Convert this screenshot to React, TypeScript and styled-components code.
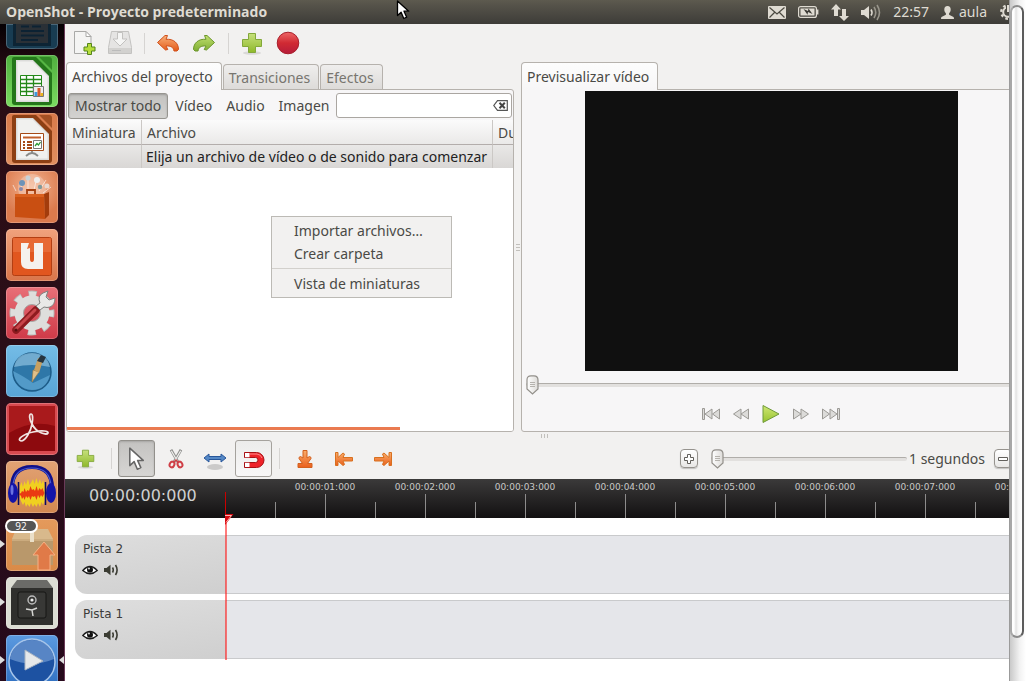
import React from 'react';
import styled, { createGlobalStyle, css } from 'styled-components';

const GlobalStyle = createGlobalStyle`
  *, *::before, *::after { box-sizing: border-box; }
  html, body { margin: 0; height: 100%; }
  body {
    background: #fff;
    color: #4a4a46;
    font: 14px/20px 'Noto Sans', 'Open Sans', sans-serif;
    overflow: hidden;
  }
  button, input { font: inherit; color: inherit; margin: 0; }
  button { border: 0; background: none; padding: 0; cursor: pointer; }
  svg { display: block; flex: none; }
`;

const Page = styled.div`
  display: flex;
  height: 100vh;
`;

const Screen = styled.div`
  flex: 1;
  min-width: 0;
  display: flex;
  flex-direction: column;
  overflow: hidden;
`;

/* ---------- top panel ---------- */

const TopBar = styled.header`
  flex: none;
  height: 24px;
  display: flex;
  align-items: center;
  padding-left: 6px;
  background: linear-gradient(#5d5a4f, #56534a 20%, #3d3c38);
  color: #dfdbd2;
`;

const WindowTitle = styled.h1`
  margin: 0 auto 0 0;
  font: 700 14px/20px 'Open Sans', 'Noto Sans', sans-serif;
`;

const Indicators = styled.div`
  display: flex;
  align-items: center;
  margin-right: -7px;
  gap: 12px;
`;

const Indicator = styled.button`
  display: flex;
  align-items: center;
  gap: 5px;
  height: 24px;

  &:last-child { margin-left: 1px; }
`;

const Pointer = styled.div`
  position: absolute;
  left: 396px;
  top: 0;
  z-index: 10;
  pointer-events: none;
`;

/* ---------- launcher ---------- */

const Desktop = styled.div`
  flex: 1;
  min-height: 0;
  display: flex;
`;

const Launcher = styled.nav`
  flex: none;
  width: 65px;
  display: flex;
  flex-direction: column;
  align-items: center;
  gap: 6px;
  padding-right: 1px;
  overflow: hidden;
  background: linear-gradient(#050003, #2a0d15 50px, #2b0e18 50%, #260a1c);
  border-right: 1px solid #6a3a58;
`;

const Tile = styled.button<{ $bg: string; $folded?: boolean }>`
  position: relative;
  flex: none;
  width: 52px;
  height: ${(p) => (p.$folded ? 25 : 52)}px;
  border-radius: ${(p) => (p.$folded ? '0 0 5px 5px' : '5px')};
  background: ${(p) => p.$bg};
  box-shadow: inset 0 0 0 1px rgba(255, 255, 255, 0.22);
`;

const Arrow = styled.span<{ $right?: boolean }>`
  position: absolute;
  top: 21px;
  ${(p) => (p.$right ? 'right: -6px;' : 'left: -6px;')}
  border: 4px solid transparent;
  ${(p) =>
    p.$right
      ? 'border-left-width: 0; border-right: 5px solid #ddd;'
      : 'border-right-width: 0; border-left: 5px solid #ddd;'}
`;

const Count = styled.span`
  position: absolute;
  left: -1px;
  top: 0;
  width: 33px;
  height: 14px;
  border: 2px solid #fff;
  border-radius: 7px;
  background: #555;
  color: #fff;
  font: 10px/10px 'Open Sans', sans-serif;
  text-align: center;
`;

/* ---------- application window ---------- */

const AppWindow = styled.main`
  flex: 1;
  min-width: 0;
  display: flex;
  flex-direction: column;
  overflow: hidden;
  background: #f2f1f0;
`;

const Toolbar = styled.div`
  flex: none;
  display: flex;
  align-items: center;
  height: 38px;
  padding-left: 1px;
`;

const ToolButton = styled.button`
  width: 36px;
  height: 36px;
  display: flex;
  align-items: center;
  justify-content: center;
`;

const Divider = styled.span<{ $w?: number }>`
  flex: none;
  width: ${(p) => p.$w ?? 12}px;
  height: 21px;
  background: linear-gradient(#d6d4d2, #d6d4d2) center / 1px 100% no-repeat;
`;

const Split = styled.div`
  flex: none;
  display: flex;
  padding-left: 1px;
`;

const Pane = styled.section<{ $w?: number }>`
  position: relative;
  display: flex;
  flex-direction: column;
  min-width: 0;
  ${(p) =>
    p.$w
      ? css`flex: 0 0 ${p.$w}px;`
      : css`flex: 1; margin-right: -12px;`}
`;

const TabRow = styled.div`
  display: flex;
  align-items: flex-end;
  gap: 1px;
  height: 28px;
  position: relative;
  z-index: 1;
  margin-bottom: -1px;
`;

const Tab = styled.button<{ $on?: boolean }>`
  height: ${(p) => (p.$on ? 28 : 25)}px;
  margin-bottom: ${(p) => (p.$on ? 0 : 1)}px;
  padding: ${(p) => (p.$on ? 0 : 1)}px 8px 0 5px;
  border: 1px solid #b6b2ad;
  border-bottom: 0;
  border-radius: 4px 4px 0 0;
  white-space: nowrap;
  background: ${(p) => (p.$on ? 'linear-gradient(#fdfdfd, #f7f6f7)' : 'linear-gradient(#efeeed, #dddbd9)')};
  color: ${(p) => (p.$on ? '#4a4a46' : '#77756f')};
`;

const Panel = styled.div`
  flex: 1;
  display: flex;
  flex-direction: column;
  border: 1px solid #b6b2ad;
  border-radius: 0 3px 3px 3px;
  background: #f7f6f7;
  overflow: hidden;
`;

const FilterRow = styled.div`
  display: flex;
  align-items: center;
  height: 30px;
  padding: 1px 1px 0;
`;

const Filter = styled.button<{ $on?: boolean }>`
  height: 26px;
  padding: 1px 6px 0;
  border: 1px solid transparent;
  border-radius: 3px;
  white-space: nowrap;
  ${(p) =>
    p.$on &&
    css`
      border-color: #979590;
      background: linear-gradient(#c3c2c0, #d3d2d0);
      box-shadow: inset 0 1px 2px rgba(0, 0, 0, 0.2);
    `}
`;

const SearchBox = styled.div`
  flex: 1;
  min-width: 0;
  height: 25px;
  display: flex;
  align-items: center;
  padding: 0 3px;
  border: 1px solid #aaa6a1;
  border-radius: 3px;
  background: #fff;
`;

const SearchInput = styled.input`
  flex: 1;
  min-width: 0;
  border: 0;
  outline: 0;
  padding: 0 4px;
  background: none;
`;

const FileArea = styled.div`
  flex: 1;
  display: flex;
  flex-direction: column;
  justify-content: space-between;
  background: #fff;
`;

const FileTable = styled.table`
  width: 100%;
  table-layout: fixed;
  border-collapse: separate;
  border-spacing: 0;

  th, td {
    height: 23px;
    padding: 0 0 0 5px;
    border-right: 1px solid #cbc8c5;
    font-weight: 400;
    text-align: left;
    white-space: nowrap;
    overflow: hidden;
  }
  th {
    height: 25px;
    padding-top: 2px;
    border-bottom: 1px solid #b3adab;
    background: linear-gradient(#fbfbfb, #eae9e8);
  }
  td {
    padding-left: 4px;
    background: linear-gradient(#e9e8e7, #d9d7d5);
    color: #222;
  }
  th:last-child, td:last-child { border-right: 0; }
`;

const Col = styled.col<{ $w?: number }>`
  width: ${(p) => (p.$w ? `${p.$w}px` : 'auto')};
`;

const ScrollMark = styled.div`
  width: 333px;
  height: 3px;
  margin-bottom: 1px;
  background: #ea7a50;
`;

const ContextMenu = styled.div`
  position: absolute;
  left: 205px;
  top: 154px;
  width: 181px;
  padding: 2px 0;
  border: 1px solid #bcbab5;
  background: #f2f1f0;
  z-index: 2;
`;

const MenuItem = styled.button`
  display: block;
  width: 100%;
  height: 23px;
  padding: 0 22px;
  text-align: left;
`;

const MenuLine = styled.hr`
  margin: 3px 0;
  border: 0;
  height: 1px;
  background: #d2d0cc;
`;

const SplitHandle = styled.div<{ $across?: boolean }>`
  flex: none;
  display: flex;
  align-items: center;
  justify-content: center;
  gap: 2px;
  ${(p) => (p.$across ? 'height: 7px; padding-left: 14px;' : 'width: 7px; flex-direction: column;')}

  i {
    background: #c2c0bc;
    ${(p) => (p.$across ? 'width: 1px; height: 4px;' : 'width: 4px; height: 1px;')}
  }
`;

/* ---------- preview ---------- */

const PreviewBody = styled.div`
  flex: 1;
  display: flex;
  flex-direction: column;
  align-items: center;
  padding: 1px 0 2px;
`;

const VideoCanvas = styled.div`
  width: 373px;
  height: 280px;
  background: #101010;
`;

const thumb = encodeURIComponent(
  "<svg xmlns='http://www.w3.org/2000/svg' width='13' height='20'><defs><linearGradient id='g'><stop stop-color='#fff'/><stop offset='1' stop-color='#dddbd8'/></linearGradient></defs><path d='M1 5Q1 .8 5 .8h3q4 0 4 4.200v9L6.500 19 1 14z' fill='url(#g)' stroke='#93908b' stroke-width='1.200'/><path d='M4 7.500h5M4 9.500h5M4 11.500h5' stroke='#b5b2ad'/></svg>"
);

const Slider = styled.input`
  appearance: none;
  display: block;
  height: 20px;
  background: none;

  &::-webkit-slider-runnable-track {
    height: 4px;
    border-top: 1px solid #b0ada9;
    border-radius: 2px;
    background: #e2e0de;
  }
  &::-webkit-slider-thumb {
    appearance: none;
    width: 13px;
    height: 20px;
    margin-top: -9px;
    background: url("data:image/svg+xml,${thumb}") no-repeat;
  }
`;

const SeekSlider = styled(Slider)`
  align-self: stretch;
  margin: 4px 4px 0;
`;

const ZoomSlider = styled(Slider)`
  width: 196px;
  margin: 0 2px 0 13px;
`;

const Transport = styled.div`
  display: flex;
  margin-top: 4px;
`;

const TransportButton = styled.button`
  width: 30px;
  height: 30px;
  display: flex;
  align-items: center;
  justify-content: center;
`;

/* ---------- timeline ---------- */

const TimelineToolbar = styled(Toolbar)`
  height: 40px;
  gap: 2px;
  padding: 0 0 1px 2px;
`;

const EditButton = styled.button<{ $look?: 'pressed' | 'raised' }>`
  flex: none;
  width: 37px;
  height: 37px;
  display: flex;
  align-items: center;
  justify-content: center;
  border: 1px solid transparent;
  border-radius: 3px;
  ${(p) =>
    p.$look === 'pressed' &&
    css`
      border-color: #92908b;
      background: linear-gradient(#c4c3c1, #d6d5d3);
      box-shadow: inset 0 1px 2px rgba(0, 0, 0, 0.15);
    `}
  ${(p) =>
    p.$look === 'raised' &&
    css`
      border-color: #a5a29d;
      background: linear-gradient(#ececeb, #f8f7f7);
    `}
`;

const ZoomGroup = styled.div`
  display: flex;
  align-items: center;
  margin: 0 -3px 0 auto;
`;

const ZoomLabel = styled.label`
  width: 85px;
  white-space: nowrap;
`;

const ZoomButton = styled.button`
  width: 18px;
  height: 19px;
  display: flex;
  align-items: center;
  justify-content: center;
  border: 1px solid #96938e;
  border-radius: 4px;
  background: linear-gradient(#fff, #e8e7e6);
  box-shadow: 0 1px 1px rgba(0, 0, 0, 0.2);
`;

const Timeline = styled.div`
  position: relative;
  flex: 1;
  background: #fff;
`;

const Ruler = styled.div`
  display: flex;
  height: 39px;
  overflow: hidden;
  background: linear-gradient(#3b3a3a, #121011);
  color: #c8c8c6;
  font-family: 'DejaVu Sans', sans-serif;
`;

const Clock = styled.div`
  flex: none;
  width: 210px;
  padding: 7px 0 0 24px;
  font-size: 16px;
  line-height: 20px;
  color: #cfd0d0;
`;

const Second = styled.div`
  flex: none;
  width: 100px;
  display: flex;
  flex-direction: column;
  justify-content: space-between;
  padding-top: 2px;
  font-size: 9px;
  line-height: 12px;
  text-align: center;
`;

const Ticks = styled.div`
  display: flex;
  align-items: flex-end;
  gap: 49px;

  i { width: 1px; height: 16px; background: #8d8c8c; }
  i + i { height: 24px; }
`;

const Playhead = styled.div`
  position: absolute;
  left: 160px;
  top: 13px;
  z-index: 1;
`;

const Tracks = styled.div`
  display: flex;
  flex-direction: column;
  gap: 6px;
  padding: 17px 0 0 10px;
`;

const Track = styled.section`
  display: flex;
  height: 59px;
`;

const TrackHead = styled.div`
  flex: none;
  width: 151px;
  padding: 4px 8px;
  border-radius: 12px 0 0 12px;
  background: linear-gradient(170deg, #dedede, #cfcfcf);
`;

const TrackName = styled.h2`
  margin: 0;
  font: 12px/20px 'DejaVu Sans', sans-serif;
  color: #3c3c3a;
`;

const TrackIcons = styled.div`
  display: flex;
  gap: 6px;
  margin-left: -1px;
  padding-top: 5px;
`;

const TrackLane = styled.div`
  flex: 1;
  border: 1px solid #c9cacc;
  border-width: 1px 0;
  background: #e5e6ea;
`;

/* ---------- page scrollbar ---------- */

const ScrollTrack = styled.div`
  flex: none;
  width: 17px;
  padding: 5px 2px 43px 0;
  border-left: 1px solid #9b9b9b;
  background: linear-gradient(90deg, #c9c9c9, #f2f2f2 60%, #fff);
`;

const ScrollThumb = styled.div`
  height: 100%;
  border: 2px solid #8c8c8c;
  border-right-color: #5c5c5c;
  border-left-color: #a8a8a8;
  border-radius: 7px;
  background: linear-gradient(90deg, #fff 20%, #e2e2e2 40%, #f6f6f6 60%, #fff);
`;

/* ---------- icons ---------- */

const MailIcon = () => (
  <svg width="18" height="13" viewBox="0 0 18 13">
    <rect width="18" height="13" rx="1" fill="#dfdbd2" />
    <path d="M1.500 1.500 9 8l7.500-6.500M1.500 11.500 6.500 6.500M16.500 11.500l-5-5" fill="none" stroke="#4b4941" strokeWidth="1.200" />
  </svg>
);

const BatteryIcon = () => (
  <svg width="21" height="12" viewBox="0 0 21 12">
    <rect x=".6" y=".6" width="17.800" height="10.800" rx="2" fill="none" stroke="#dfdbd2" strokeWidth="1.200" />
    <rect x="2.500" y="2.500" width="14" height="7" fill="#dfdbd2" />
    <path d="M19.500 3.500v5" stroke="#dfdbd2" strokeWidth="1.800" />
    <path d="m5.500 3 4.500 2 .5-2.500 4 5.500-4.500-2-.5 2.800z" fill="#3b3934" />
  </svg>
);

const NetworkIcon = () => (
  <svg width="18" height="17" viewBox="0 0 18 17">
    <path d="M5 0 10 5.500H7V12H3V5.500H0zM13 17l-5-5h3V5h4v7h3z" fill="#dfdbd2" />
  </svg>
);

const SoundIcon = () => (
  <svg width="20" height="17" viewBox="0 0 20 17">
    <path d="M0 6h3l5-4v13l-5-4H0z" fill="#dfdbd2" />
    <path d="M10 5.500q2 3 0 6" fill="none" stroke="#dfdbd2" strokeWidth="1.600" />
    <path d="M13 3q3.500 5.500 0 11M16 1q5 7.500 0 15" fill="none" stroke="#98958b" strokeWidth="1.600" />
  </svg>
);

const UserIcon = () => (
  <svg width="13" height="13" viewBox="0 0 13 13">
    <path d="M6.500 0c2.200 0 3.200 1.500 3.200 3.500 0 1.800-.7 2.900-1.600 3.700v1.500l4.400 2.300q.5.500.5 2H0q0-1.500.5-2l4.400-2.300V7.200C4 6.400 3.300 5.300 3.300 3.500 3.300 1.500 4.300 0 6.500 0z" fill="#dfdbd2" />
  </svg>
);

const GearIcon = () => (
  <svg width="16" height="16" viewBox="0 0 16 16">
    <circle cx="8" cy="8" r="4.800" fill="none" stroke="#dfdbd2" strokeWidth="2" />
    <circle cx="8" cy="8" r="6.700" fill="none" stroke="#dfdbd2" strokeWidth="2.400" strokeDasharray="2.600 2.660" />
    <path d="M8 0v9" stroke="#4b4941" strokeWidth="4" />
    <path d="M8 1v7" stroke="#dfdbd2" strokeWidth="2" />
  </svg>
);

const PointerIcon = ({ size = 20, edge = '#fff', fill = '#000' }: { size?: number; edge?: string; fill?: string }) => (
  <svg width={size * 0.75} height={size} viewBox="0 0 15 20">
    <path d="M1.500 1v14.500l3.600-3.300 2.700 6.300 2.900-1.300-2.700-6h4.700z" fill={fill} stroke={edge} strokeWidth="1.300" strokeLinejoin="round" />
  </svg>
);

const NewIcon = () => (
  <svg width="24" height="24" viewBox="0 0 24 24">
    <path d="M2.500.5h11.500l5 5v17h-16.500z" fill="#f4f4f3" stroke="#a9a9a7" />
    <path d="M14 .5v5h5z" fill="#fff" stroke="#a9a9a7" />
    <path d="M15.500 12.500h4v3.500h3.500v4h-3.500v3.500h-4v-3.500h-3.500v-4h3.500z" fill="#b6dc3c" stroke="#54851a" />
  </svg>
);

const SaveIcon = () => (
  <svg width="24" height="24" viewBox="0 0 24 24">
    <path d="M3.500.5h17l3 16v6H.5v-6z" fill="#e5e4e3" stroke="#c3c2c0" />
    <path d="M1 17h22v5H1z" fill="#d2d1cf" />
    <path d="M4 19.500h9" stroke="#bbb" />
    <path d="M9.500 1.500h5V8h4.500l-7 7-7-7h4.500z" fill="#f5f5f4" stroke="#c2c1bf" />
  </svg>
);

const ArrowBack = ({ forward }: { forward?: boolean }) => {
  const id = forward ? 'redo' : 'undo';
  return (
    <svg width="24" height="24" viewBox="0 0 24 24">
      <defs>
        <linearGradient id={id} x2="0" y2="1">
          <stop stopColor={forward ? '#c0df6e' : '#f9b07a'} />
          <stop offset="1" stopColor={forward ? '#7fae33' : '#e35a18'} />
        </linearGradient>
      </defs>
      <path
        transform={forward ? 'translate(24 0) scale(-1 1)' : undefined}
        d="M1.500 11.500 9 4.500h2.500L10 8.300c7.500-.6 12.500 3.700 12.500 10.200l-1.500 1.500h-3c-.6-4-3.500-5.300-8-5l1.800 3.500L9.500 19z"
        fill={`url(#${id})`}
        stroke={forward ? '#6c962c' : '#d0501c'}
        strokeLinejoin="round"
      />
    </svg>
  );
};

const PlusIcon = ({ size = 24 }: { size?: number }) => (
  <svg width={size} height={size} viewBox="0 0 24 24">
    <defs>
      <linearGradient id="plus" x2="0" y2="1">
        <stop stopColor="#c6e07c" />
        <stop offset="1" stopColor="#8fb92a" />
      </linearGradient>
    </defs>
    <ellipse cx="12" cy="22" rx="9" ry="1.800" fill="#000" opacity=".1" />
    <path d="M8.500 2.500h7v6h6v7h-6v6h-7v-6h-6v-7h6z" fill="url(#plus)" stroke="#83a83a" strokeLinejoin="round" />
  </svg>
);

const RecordIcon = () => (
  <svg width="24" height="24" viewBox="0 0 24 24">
    <defs>
      <linearGradient id="rec" x2="0" y2="1">
        <stop stopColor="#ee6767" />
        <stop offset=".5" stopColor="#d02a33" />
        <stop offset="1" stopColor="#b51c3a" />
      </linearGradient>
    </defs>
    <circle cx="12" cy="12" r="10.800" fill="url(#rec)" stroke="#a8202c" />
  </svg>
);

const ClearIcon = () => (
  <svg width="15" height="11" viewBox="0 0 15 11">
    <path d="M4.500.7h9.800v9.600H4.500L.8 5.500z" fill="#fff" stroke="#555" strokeWidth="1.200" />
    <path d="m6.500 2.800 5.300 5.400m0-5.400L6.500 8.200" stroke="#444" strokeWidth="2" />
  </svg>
);

const SkipIcon = ({ bar, flip }: { bar?: boolean; flip?: boolean }) => (
  <svg width="20" height="14" viewBox="0 0 20 14">
    <g transform={flip ? 'translate(20 0) scale(-1 1)' : undefined} fill="#dcdbd9" stroke="#9b9995">
      {bar && <path d="M1.500 1.500h2v11h-2z" />}
      <path d={bar ? 'M11 2v10L4 7zM18.500 2v10L11.500 7z' : 'M10 2v10L2.500 7zM17.500 2v10L10 7z'} strokeLinejoin="round" />
    </g>
  </svg>
);

const PlayIcon = () => (
  <svg width="20" height="20" viewBox="0 0 20 20">
    <defs>
      <linearGradient id="play" x2="0" y2="1">
        <stop stopColor="#cfe774" />
        <stop offset="1" stopColor="#97c32f" />
      </linearGradient>
    </defs>
    <path d="M2 1.500v17L18 10z" fill="url(#play)" stroke="#6f9a3a" strokeLinejoin="round" />
  </svg>
);

const ScissorsIcon = () => (
  <svg width="18" height="20" viewBox="0 0 18 20">
    <path d="M4 .8 11 13M14 .8 7 13" stroke="#8f8f8d" strokeWidth="2.800" />
    <path d="M4.300 1.800 10.300 12M13.700 1.800 7.700 12" stroke="#efefed" strokeWidth="1.200" />
    <ellipse cx="5" cy="15.500" rx="2.300" ry="2.900" transform="rotate(25 5 15.500)" fill="none" stroke="#cf4048" strokeWidth="2" />
    <ellipse cx="13" cy="15.500" rx="2.300" ry="2.900" transform="rotate(-25 13 15.500)" fill="none" stroke="#cf4048" strokeWidth="2" />
    <path d="m7 13 2-2 2 2" fill="none" stroke="#cf4048" strokeWidth="1.500" />
  </svg>
);

const ResizeIcon = () => (
  <svg width="24" height="24" viewBox="0 0 24 24">
    <ellipse cx="12" cy="20" rx="8" ry="3" fill="#000" opacity=".16" />
    <path d="M1 11l5-4v2.500h12V7l5 4-5 4v-2.500H6V15z" fill="#5588c5" stroke="#28579a" strokeLinejoin="round" />
  </svg>
);

const MagnetIcon = () => (
  <svg width="22" height="20" viewBox="0 0 22 20">
    <path d="M1.500 3.500h12a7 7 0 0 1 0 15h-12v-5h11a2.500 2.500 0 0 0 0-5h-11z" fill="#ee2229" stroke="#a81014" />
    <path d="M2 4h4.500v4.200H2zM2 13.800h4.500V18H2z" fill="#fff" />
    <path d="M7 5h7q4 .5 5 4" fill="none" stroke="#ff8a8a" />
  </svg>
);

const MarkIcon = ({ kind }: { kind: 'down' | 'left' | 'right' }) => (
  <svg width="20" height="20" viewBox="0 0 20 20">
    <defs>
      <linearGradient id={`mark-${kind}`} x2="0" y2="1">
        <stop stopColor="#f9ae6c" />
        <stop offset="1" stopColor="#ea5f1c" />
      </linearGradient>
    </defs>
    {kind === 'down' ? (
      <path
        d="M8 1.500h4v7.500l2.500-1.500q2 .5 1.500 2L12.500 14.500h4.500v4H3v-4h4.500L4 9.500q-.5-1.500 1.500-2L8 9z"
        fill="url(#mark-down)"
        stroke="#d2601e"
        strokeLinejoin="round"
      />
    ) : (
      <g transform={kind === 'right' ? 'translate(20 0) scale(-1 1)' : undefined}>
        <path
          d="M1.500 3.500h2.500v5L9 4l1.500 1-1.500 3.500h9.500v3.500H9l1.500 3.500L9 16.500 4 12v4.500H1.500z"
          fill={`url(#mark-${kind})`}
          stroke="#d8701f"
          strokeLinejoin="round"
        />
      </g>
    )}
  </svg>
);

const BoxSign = ({ plus }: { plus?: boolean }) => (
  <svg width="12" height="12" viewBox="0 0 12 12">
    <path
      d={plus ? 'M4.500 1.500h3v3h3v3h-3v3h-3v-3h-3v-3h3z' : 'M1.500 4.500h9v3h-9z'}
      fill="#fff"
      stroke="#62605c"
    />
  </svg>
);

const EyeIcon = () => (
  <svg width="16" height="12" viewBox="0 0 16 12">
    <path d="M.8 6.500Q8-1.500 15.200 6.500 8 13 .8 6.500z" fill="#fff" stroke="#1c1c1c" strokeWidth="1.300" />
    <circle cx="8" cy="5.800" r="3" fill="#111" />
    <circle cx="7" cy="4.600" r="1" fill="#ddd" />
  </svg>
);

const VolumeIcon = () => (
  <svg width="15" height="12" viewBox="0 0 15 12">
    <path d="M0 4h2.500L6.500.8v10.400L2.500 8H0z" fill="#3b3c33" />
    <path d="M8.500 3.500q1.500 2.500 0 5M11.500 1q3.200 5 0 10" fill="none" stroke="#3b3c33" strokeWidth="1.600" />
  </svg>
);

const PlayheadIcon = () => (
  <svg width="10" height="168" viewBox="0 0 10 168">
    <rect x="0" width="1" height="27" fill="#c00" />
    <rect x="0" y="27" width="2" height="141" fill="#ff1010" opacity=".55" />
    <path d="M0 22h8.500L0 33z" fill="#d80b12" />
    <path d="M0 23.500h6.500l-5.500 7" fill="none" stroke="#ffb3b0" />
  </svg>
);

/* ---------- launcher artwork ---------- */

const Art = ({ children, h = 52 }: { children: React.ReactNode; h?: number }) => (
  <svg width="52" height={h} viewBox={`0 ${52 - h} 52 ${h}`}>{children}</svg>
);

const Doc = ({ edge, children }: { edge: string; children: React.ReactNode }) => (
  <>
    <path d="M6 4q0-2 2-2h22l16 16v29q0 3-3 3H9q-3 0-3-3z" fill={edge} />
    <path d="M10 5h17l16 16v26H10z" fill="#dcdcda" />
    <path d="M11.500 6.500h15l15 15v24h-30z" fill="#f1f1ef" />
    <path d="M33 2h10q3 0 3 3v10z" fill={edge} opacity=".7" />
    {children}
  </>
);

const WriterArt = () => (
  <Art h={25}>
    <path d="M7 20h38v29H7z" fill="#0d2434" />
    <path d="M10 20h32v26H10z" fill="#2a3036" />
    <path d="M15 29.500h8M26 29.500h9M15 34h23M15 38.500h23M15 43h17" stroke="#0c2233" strokeWidth="1.800" />
  </Art>
);

const CalcArt = () => (
  <Art>
    <Doc edge="#24761a">
      <path d="M14.500 20.500h21v20h-21z" fill="#fff" stroke="#24891a" />
      <path d="M14 24.500h22M14 28.500h22M14 32.500h22M14 36.500h22M20.500 20v21M27.500 20v21" stroke="#24891a" strokeWidth="1.300" />
      <path d="M27.500 31.500h10v10h-10z" fill="#eee" stroke="#777" />
      <path d="M28.500 37h3v4h-3z" fill="#3e9bdc" />
      <path d="M31.500 33h3v8h-3z" fill="#d8592a" />
      <path d="M34.500 38h2.500v3h-2.500z" fill="#eab31c" />
    </Doc>
  </Art>
);

const ImpressArt = () => (
  <Art>
    <Doc edge="#8d3f14">
      <path d="M14.500 20.500h23v17h-23z" fill="#fff" stroke="#a54a17" />
      <path d="M17 24.500h18" stroke="#c2602c" strokeWidth="2" />
      <path d="M17 29h2M17 32h2M17 35h2M21 29h5M21 32h5M21 35h5" stroke="#a54a17" strokeWidth="1.800" />
      <path d="M27.500 27.500h8v8h-8z" fill="#fff" stroke="#777" />
      <path d="m29 33 2-2.500 1.500 1.500 2-3" fill="none" stroke="#2c9a36" strokeWidth="1.300" />
      <path d="M26 38v2m-6 3q6-6 12 0" fill="none" stroke="#8a8a88" strokeWidth="1.800" />
    </Doc>
  </Art>
);

const SoftwareArt = () => (
  <Art>
    <circle cx="26" cy="17" r="14" fill="#fff" opacity=".25" />
    <path d="m10 20-3-6m9 5-2-9m8 9V6m6 13 3-13m2 14 7-11m-3 13 8-6" stroke="#fff" opacity=".6" />
    <circle cx="16" cy="12" r="3" fill="#6d93b8" />
    <circle cx="22" cy="7" r="2.500" fill="#c9d3d8" />
    <circle cx="31" cy="9" r="3" fill="#eee" />
    <circle cx="34" cy="16" r="2.200" fill="#7f9a9b" />
    <circle cx="15" cy="18" r="2" fill="#88a" />
    <circle cx="41" cy="15" r="2.500" fill="#e9d8cf" />
    <path d="M21 23v-4h8v4" fill="none" stroke="#a63e0e" strokeWidth="1.800" />
    <path d="M9 23h29l1 25-30-2z" fill="#c94f12" />
    <path d="M38 23l5-2v23l-4 4z" fill="#a33c0c" />
    <path d="M9 23h29v3H9z" fill="#d9601f" />
  </Art>
);

const UbuntuOneArt = () => (
  <Art>
    <rect x="6.500" y="8.500" width="39" height="38" rx="2" fill="#e1561f" stroke="#b33e12" />
    <path d="M7 9h38v14H7z" fill="#ee7b4b" opacity=".5" />
    <path d="M15 14h8l-2 6 3-1v11q0 3 2 3t2-3V14h9v26H22q-7 0-7-7z" fill="#f5f1ee" />
  </Art>
);

const SettingsArt = () => (
  <Art>
    <circle cx="26" cy="26" r="19" fill="none" stroke="#b9b9b7" strokeWidth="7" strokeDasharray="8 6.920" strokeDashoffset="4" />
    <circle cx="26" cy="26" r="18.500" fill="none" stroke="#dededc" strokeWidth="6" strokeDasharray="6.600 7.930" strokeDashoffset="3.300" />
    <circle cx="26" cy="26" r="13" fill="none" stroke="#dededc" strokeWidth="9" />
    <circle cx="26" cy="26" r="8.500" fill="none" stroke="#a6a6a4" />
    <path d="m10 43 20-20" stroke="#8e1b1f" strokeWidth="7.500" strokeLinecap="round" />
    <path d="m10 42 19-19" stroke="#c8454a" strokeWidth="3" strokeLinecap="round" />
    <path
      d="M30 19l4-3q-3-7 3-10l5-2-2 6 3 3 6-2q0 7-5 9-3 1-6 0l-4 3z"
      fill="#e9e9e7"
      stroke="#80807e"
      strokeLinejoin="round"
    />
    <circle cx="10" cy="43" r="1.500" fill="#5a1012" />
  </Art>
);

const BrushArt = () => (
  <Art>
    <circle cx="26" cy="27" r="19" fill="#2e77a8" stroke="#1d5c88" strokeWidth="1.500" />
    <path d="M8 22q3-14 18-14t18 14q-18-4-36 0z" fill="#8fc2e0" opacity=".7" />
    <path d="M7 26q12 6 20 12l17-8q-4 15-18 15-16-1-19-19z" fill="#5ba2cf" opacity=".8" />
    <path d="m26 37 1-12 6 2z" fill="#e0c08a" stroke="#a37a3c" strokeWidth=".6" />
    <path d="m28 25 4-12 5 2-4 13z" fill="#c8a060" />
    <path d="m31 16 4-6 5 2-3 6z" fill="#26343f" />
  </Art>
);

const PdfArt = () => (
  <Art>
    <rect x="3" y="3" width="46" height="45" fill="#8d0a0e" />
    <path d="M3 3h46v20Q26 16 3 30z" fill="#c52a2a" opacity=".5" />
    <path
      d="M26 21c-3-5-3-10-1-10s2 5 1 10c-1 6-6 17-11 17-5-1 2-7 12-9 9-2 16-1 15 1s-11 1-16-9z"
      fill="none"
      stroke="#f1e4e2"
      strokeWidth="1.700"
    />
  </Art>
);

const AudacityArt = () => (
  <Art>
    <path d="M6 27q0-21 20-21t20 21" fill="none" stroke="#10108a" strokeWidth="4" />
    <path d="M7 25Q8 7 26 7t19 18" fill="none" stroke="#4a5ad0" strokeWidth="1.200" />
    <path
      d="M14 38V25l1.500-4 1.500 5 1.500-6 1.500 4 2-6 1.500 6 2-3 1.500-3 1.500 5 2-6 1.500 6 2-5 1.500 5 1.500-4 1.500 5V40l-1.500 4-1.500-3-1.500 5-2-4-1.500 4-2-3-1.500 3-2-4-1.500 4-2-3-1.500 3-1.500-5-1.500 3z"
      fill="#f0d020"
    />
    <path
      d="M13 33l2-1 1-2 1.500 1 1-4 1.500 4 1.500-2 1.500 1 1.500-5 1.500 4 1.500-1 1.500 2 1.500-5 1.500 5 1.500-3 1.500 2 1.500-2 1 3 1 2-1 2-1 2-1.500-2-1.500 3-1.500-3-1.500 5-1.500-4-1.500 1-1.500-1-1.500 4-1.500-4-1.500 2-1.500-2-1.500 4-1-3-1.500 2-1-3z"
      fill="#ea3a12"
    />
    <ellipse cx="7" cy="32" rx="5" ry="10" fill="#1414a8" />
    <ellipse cx="45" cy="32" rx="5" ry="10" fill="#1414a8" />
    <path d="M12.500 21v23M39.500 21v23" stroke="#0a0a60" strokeWidth="1.500" />
    <ellipse cx="6" cy="29" rx="1.500" ry="5" fill="#6a72e0" />
  </Art>
);

const UpdateArt = () => (
  <Art>
    <path d="M10 10h32l5 10H6z" fill="#d8b98c" />
    <path d="M6 20h41v26H6z" fill="#b9986b" />
    <path d="M6 20h41v2H6z" fill="#cbab7e" />
    <path d="M24 10h4v13h-4z" fill="#eadfc8" />
    <path d="m38 23 11 13h-5v15H32V36h-5z" fill="#e07a48" stroke="#f6b184" />
  </Art>
);

const SafeArt = () => (
  <Art>
    <path d="M11 3h30l6 8H5z" fill="#6b6b68" />
    <path d="M5 11h42v37H5z" fill="#2f2f2d" />
    <rect x="12" y="15" width="28" height="26" rx="2" fill="#383836" stroke="#161615" />
    <circle cx="26" cy="23" r="4" fill="none" stroke="#bbb" strokeWidth="1.400" />
    <circle cx="26" cy="23" r="1.600" fill="#eee" />
    <path d="m26 33 5-2m-5 2-6-1m6 1 1 6" stroke="#d5d5d3" strokeWidth="1.500" />
  </Art>
);

const MediaArt = () => (
  <Art>
    <circle cx="26" cy="27" r="23" fill="#1d52a2" stroke="#a8c6ea" strokeWidth="1.500" />
    <path d="M4 24Q8 5 26 5t22 19q-22 9-44 0z" fill="#7fa8dc" opacity=".6" />
    <path d="M19 15v20l18-9z" fill="#e6e8ea" stroke="#a9b4c2" />
  </Art>
);

type LauncherTile = {
  name: string;
  bg: string;
  art: React.ReactNode;
  count?: number;
  left?: boolean;
  right?: boolean;
  folded?: boolean;
};

const tiles: LauncherTile[] = [
  { name: 'Writer', bg: '#183c52', art: <WriterArt />, folded: true },
  { name: 'Calc', bg: 'linear-gradient(#4fae3e, #7bdc60)', art: <CalcArt /> },
  { name: 'Impress', bg: 'linear-gradient(#d9794a, #e08f5f)', art: <ImpressArt /> },
  { name: 'Software', bg: 'radial-gradient(circle at 50% 30%, #f3b492, #db7a4d 70%)', art: <SoftwareArt /> },
  { name: 'Ubuntu One', bg: 'linear-gradient(#f0a27d, #d9754a)', art: <UbuntuOneArt /> },
  { name: 'Configuración', bg: 'linear-gradient(#e87078, #cf3a48)', art: <SettingsArt /> },
  { name: 'Scribus', bg: 'linear-gradient(#74bce6, #58a3d5)', art: <BrushArt /> },
  { name: 'Lector PDF', bg: '#d84a50', art: <PdfArt /> },
  { name: 'Audacity', bg: 'linear-gradient(#e2a274, #d38850)', art: <AudacityArt /> },
  { name: 'Actualizaciones', bg: 'linear-gradient(#e49a5c, #d98a48)', art: <UpdateArt />, count: 92, left: true },
  { name: 'Caja fuerte', bg: '#dcddd4', art: <SafeArt />, left: true },
  { name: 'OpenShot', bg: 'linear-gradient(#5b9ae0, #2f6fc0)', art: <MediaArt />, left: true, right: true },
];

const seconds = [1, 2, 3, 4, 5, 6, 7, 8];

export default function App() {
  return (
    <Page>
      <GlobalStyle />
      <Screen>
        <TopBar>
          <WindowTitle>OpenShot - Proyecto predeterminado</WindowTitle>
          <Indicators>
            <Indicator aria-label="Mensajes"><MailIcon /></Indicator>
            <Indicator aria-label="Batería"><BatteryIcon /></Indicator>
            <Indicator aria-label="Red"><NetworkIcon /></Indicator>
            <Indicator aria-label="Sonido"><SoundIcon /></Indicator>
            <Indicator>22:57</Indicator>
            <Indicator><UserIcon />aula</Indicator>
            <Indicator aria-label="Sistema"><GearIcon /></Indicator>
          </Indicators>
          <Pointer><PointerIcon edge="#000" fill="#fff" /></Pointer>
        </TopBar>

        <Desktop>
          <Launcher aria-label="Lanzador">
            {tiles.map((t) => (
              <Tile key={t.name} aria-label={t.name} $bg={t.bg} $folded={t.folded}>
                {t.art}
                {t.count && <Count>{t.count}</Count>}
                {t.left && <Arrow />}
                {t.right && <Arrow $right />}
              </Tile>
            ))}
          </Launcher>

          <AppWindow>
            <Toolbar>
              <ToolButton aria-label="Nuevo"><NewIcon /></ToolButton>
              <ToolButton aria-label="Guardar"><SaveIcon /></ToolButton>
              <Divider />
              <ToolButton aria-label="Deshacer"><ArrowBack /></ToolButton>
              <ToolButton aria-label="Rehacer"><ArrowBack forward /></ToolButton>
              <Divider />
              <ToolButton aria-label="Importar"><PlusIcon /></ToolButton>
              <ToolButton aria-label="Exportar"><RecordIcon /></ToolButton>
            </Toolbar>

            <Split>
              <Pane $w={448}>
                <TabRow>
                  <Tab $on>Archivos del proyecto</Tab>
                  <Tab>Transiciones</Tab>
                  <Tab>Efectos</Tab>
                </TabRow>
                <Panel>
                  <FilterRow>
                    <Filter $on>Mostrar todo</Filter>
                    <Filter>Vídeo</Filter>
                    <Filter>Audio</Filter>
                    <Filter>Imagen</Filter>
                    <SearchBox>
                      <SearchInput type="text" aria-label="Buscar" />
                      <button aria-label="Borrar"><ClearIcon /></button>
                    </SearchBox>
                  </FilterRow>
                  <FileArea>
                    <FileTable>
                      <colgroup><Col $w={75} /><Col /><Col $w={20} /></colgroup>
                      <thead>
                        <tr><th>Miniatura</th><th>Archivo</th><th>Du</th></tr>
                      </thead>
                      <tbody>
                        <tr><td /><td>Elija un archivo de vídeo o de sonido para comenzar</td><td /></tr>
                      </tbody>
                    </FileTable>
                    <ScrollMark />
                  </FileArea>
                </Panel>
                <ContextMenu>
                  <MenuItem>Importar archivos…</MenuItem>
                  <MenuItem>Crear carpeta</MenuItem>
                  <MenuLine />
                  <MenuItem>Vista de miniaturas</MenuItem>
                </ContextMenu>
              </Pane>

              <SplitHandle><i /><i /><i /></SplitHandle>

              <Pane>
                <TabRow><Tab $on>Previsualizar vídeo</Tab></TabRow>
                <Panel>
                  <PreviewBody>
                    <VideoCanvas />
                    <SeekSlider type="range" defaultValue={0} aria-label="Posición" />
                    <Transport>
                      <TransportButton aria-label="Inicio"><SkipIcon bar /></TransportButton>
                      <TransportButton aria-label="Retroceder"><SkipIcon /></TransportButton>
                      <TransportButton aria-label="Reproducir"><PlayIcon /></TransportButton>
                      <TransportButton aria-label="Avanzar"><SkipIcon flip /></TransportButton>
                      <TransportButton aria-label="Final"><SkipIcon bar flip /></TransportButton>
                    </Transport>
                  </PreviewBody>
                </Panel>
              </Pane>
            </Split>

            <SplitHandle $across><i /><i /><i /></SplitHandle>

            <TimelineToolbar>
              <EditButton aria-label="Añadir pista"><PlusIcon size={21} /></EditButton>
              <Divider $w={10} />
              <EditButton $look="pressed" aria-label="Seleccionar"><PointerIcon size={24} edge="#666" fill="#fff" /></EditButton>
              <EditButton aria-label="Cortar"><ScissorsIcon /></EditButton>
              <EditButton aria-label="Redimensionar"><ResizeIcon /></EditButton>
              <EditButton $look="raised" aria-label="Ajustar"><MagnetIcon /></EditButton>
              <Divider $w={10} />
              <EditButton aria-label="Añadir marcador"><MarkIcon kind="down" /></EditButton>
              <EditButton aria-label="Marcador anterior"><MarkIcon kind="left" /></EditButton>
              <EditButton aria-label="Marcador siguiente"><MarkIcon kind="right" /></EditButton>
              <ZoomGroup>
                <ZoomButton aria-label="Acercar"><BoxSign plus /></ZoomButton>
                <ZoomSlider id="zoom" type="range" defaultValue={0} />
                <ZoomLabel htmlFor="zoom">1 segundos</ZoomLabel>
                <ZoomButton aria-label="Alejar"><BoxSign /></ZoomButton>
              </ZoomGroup>
            </TimelineToolbar>

            <Timeline>
              <Ruler>
                <Clock>00:00:00:000</Clock>
                {seconds.map((s) => (
                  <Second key={s}>
                    {`00:00:0${s}:000`}
                    <Ticks><i /><i /></Ticks>
                  </Second>
                ))}
              </Ruler>
              <Tracks>
                {['Pista 2', 'Pista 1'].map((name) => (
                  <Track key={name}>
                    <TrackHead>
                      <TrackName>{name}</TrackName>
                      <TrackIcons>
                        <button aria-label="Visible"><EyeIcon /></button>
                        <button aria-label="Volumen"><VolumeIcon /></button>
                      </TrackIcons>
                    </TrackHead>
                    <TrackLane />
                  </Track>
                ))}
              </Tracks>
              <Playhead><PlayheadIcon /></Playhead>
            </Timeline>
          </AppWindow>
        </Desktop>
      </Screen>
      <ScrollTrack><ScrollThumb /></ScrollTrack>
    </Page>
  );
}
